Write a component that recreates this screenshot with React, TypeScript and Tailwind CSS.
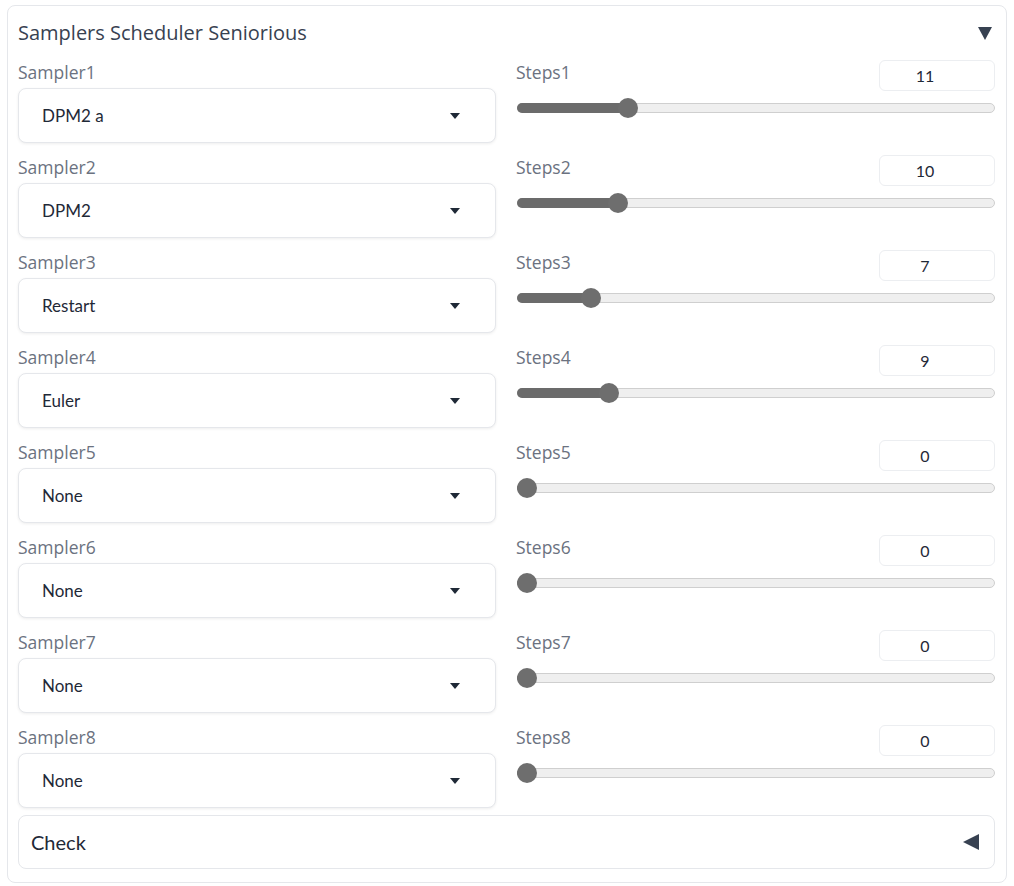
const rows = [
  { sampler: 'DPM2 a', steps: 11 },
  { sampler: 'DPM2', steps: 10 },
  { sampler: 'Restart', steps: 7 },
  { sampler: 'Euler', steps: 9 },
  { sampler: 'None', steps: 0 },
  { sampler: 'None', steps: 0 },
  { sampler: 'None', steps: 0 },
  { sampler: 'None', steps: 0 },
];

const MAX_STEPS = 50;

function Caret() {
  return (
    <svg width="10" height="6" viewBox="0 0 10 6" className="shrink-0">
      <path d="M0 0 L10 0 L5 6 Z" fill="#1f2937" />
    </svg>
  );
}

function Slider({ value }: { value: number }) {
  // thumb centre travels 457px over the full range
  const pos = 10 + (value / MAX_STEPS) * 457;
  return (
    <div className="relative h-[20px] w-full">
      <div className="absolute left-0 right-0 top-[5px] h-[10px] rounded-full border border-[#cfcfcf] bg-[#efefef]" />
      <div
        className="absolute left-0 top-[5px] h-[10px] rounded-full bg-[#6b6b6b]"
        style={{ width: pos }}
      />
      <div
        className="absolute top-0 h-[20px] w-[20px] rounded-full bg-[#6e6e6e]"
        style={{ left: pos - 10 }}
      />
    </div>
  );
}

function Row({ index, sampler, steps }: { index: number; sampler: string; steps: number }) {
  return (
    <div className="grid grid-cols-[478px_479px] gap-x-[20px]">
      <div>
        <div className="h-[20px] font-['Open_Sans',sans-serif] text-[17.5px] leading-[20px] text-[#6b7280]">
          Sampler{index}
        </div>
        <div className="mt-[6px] flex h-[55px] items-center justify-between rounded-lg border border-[#e5e7eb] bg-white pl-[23px] pr-[35px] shadow-[0_1px_3px_rgba(0,0,0,0.07)]">
          <span className="text-[17px] text-[#1f2937]">{sampler}</span>
          <Caret />
        </div>
      </div>
      <div>
        <div className="flex items-start justify-between">
          <div className="h-[20px] font-['Open_Sans',sans-serif] text-[17.5px] leading-[20px] text-[#6b7280]">
            Steps{index}
          </div>
          <div className="-mt-[2px] flex h-[31px] w-[116px] items-center justify-center rounded-md border border-[#eceef1] bg-white pr-[24px] text-[16px] text-[#1f2937]">
            {steps}
          </div>
        </div>
        <div className="mt-[7px] pl-px">
          <Slider value={steps} />
        </div>
      </div>
    </div>
  );
}

export default function App() {
  return (
    <div className="min-h-screen bg-white pl-[7px] pt-[5px] font-['Lato',sans-serif]">
      <div className="w-[1000px] rounded-lg border border-[#e5e7eb] bg-white pb-[13px] pl-[10px] pr-[11px] pt-[14px]">
        <div className="mb-[16px] flex h-[26px] items-center justify-between">
          <h3 className="font-['Open_Sans',sans-serif] text-[20px] text-[#374151]">
            Samplers Scheduler Seniorious
          </h3>
          <svg width="14" height="14" viewBox="0 0 14 14" className="mr-[3px]">
            <path d="M0 1 L14 1 L7 14 Z" fill="#374151" />
          </svg>
        </div>

        <div className="flex flex-col gap-[14px]">
          {rows.map((r, i) => (
            <Row key={i} index={i + 1} sampler={r.sampler} steps={r.steps} />
          ))}
        </div>

        <div className="mt-[7px] flex h-[54px] items-center justify-between rounded-lg border border-[#e5e7eb] bg-white pl-[12px] pr-[15px]">
          <span className="text-[20px] text-[#1f2937]">Check</span>
          <svg width="16" height="16" viewBox="0 0 16 16">
            <path d="M16 0 L16 16 L0 8 Z" fill="#374151" />
          </svg>
        </div>
      </div>
    </div>
  );
}
